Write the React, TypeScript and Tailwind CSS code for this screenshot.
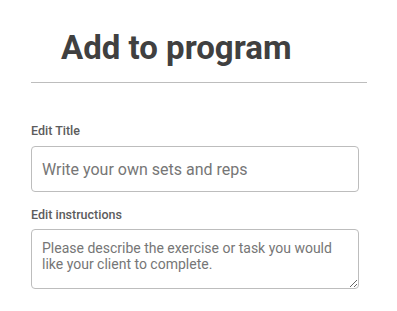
export default function App() {
  return (
    <div className="min-h-screen bg-white" style={{ fontFamily: "Roboto, 'Liberation Sans', sans-serif" }}>
      <div className="ml-[31px] w-[336px]">
        <h1 className="pl-[30px] pt-[28px] text-[33px] font-bold leading-[40px] text-[#404040]">Add to program</h1>
        <div className="mt-[14px] border-t border-[#bdbdbd]" />
        <div className="w-[328px]">
          <label className="mt-[40px] block text-[12.5px] font-medium leading-[16px] text-[#5c5c5c]">Edit Title</label>
          <input
            className="mt-[7px] block h-[46px] w-full rounded-[4px] border border-[#bdbdbd] px-[10px] text-[16px] text-[#333] outline-none placeholder:text-[#767676]"
            placeholder="Write your own sets and reps"
          />
          <label className="mt-[15px] block text-[12.5px] font-medium leading-[16px] text-[#5c5c5c]">Edit instructions</label>
          <textarea
            className="mt-[6px] block h-[60px] w-full rounded-[4px] border border-[#bdbdbd] px-[10px] pt-[10px] text-[14px] leading-[16px] text-[#333] outline-none placeholder:text-[#767676]"
            placeholder="Please describe the exercise or task you would like your client to complete."
          />
        </div>
      </div>
    </div>
  );
}
